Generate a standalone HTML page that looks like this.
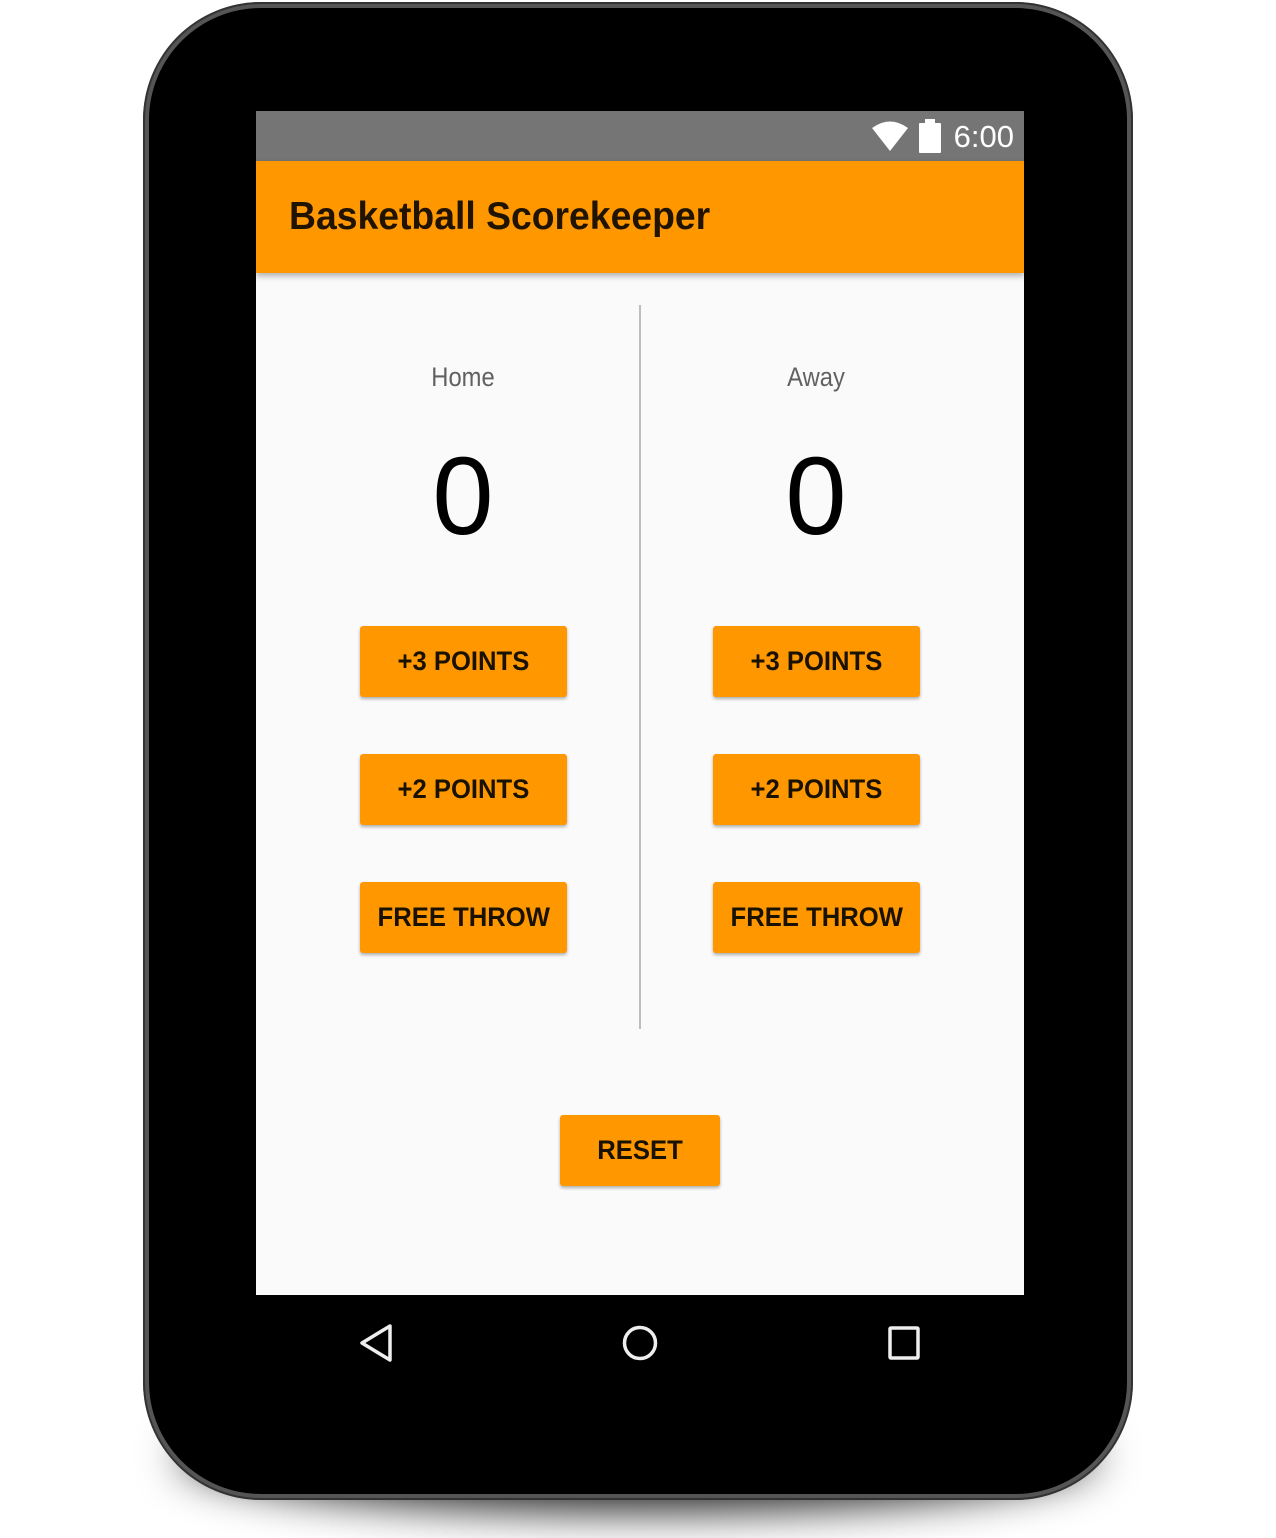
<!DOCTYPE html>
<html><head><meta charset="utf-8"><style>
html,body{margin:0;padding:0;background:#fff;}
body{width:1276px;height:1538px;position:relative;overflow:hidden;font-family:"Liberation Sans",sans-serif;}
.shadow{position:absolute;left:180px;top:1400px;width:916px;height:110px;border-radius:50%;background:rgba(0,0,0,0.9);filter:blur(22px);}
.dev{position:absolute;left:143px;top:2px;width:990px;height:1498px;border-radius:118px;background:#555;box-shadow:inset 0 0 0 2px #333;}
.dev2{position:absolute;left:6px;top:6px;right:6px;bottom:6px;border-radius:112px;background:#000;}
.screen{position:absolute;left:256px;top:111px;width:768px;height:1184px;background:#fafafa;overflow:hidden;}
.status{position:absolute;left:0;top:0;width:768px;height:50px;background:#757575;}
.time{position:absolute;right:10px;top:8px;color:#fff;font-size:31px;}
.bar{position:absolute;left:0;top:50px;width:768px;height:112px;background:#ff9800;box-shadow:0 3px 6px rgba(0,0,0,0.3);}
.title{position:absolute;left:33px;top:34px;font-size:39px;color:#201400;font-weight:bold;transform:scaleX(0.957);transform-origin:left;}
.div{position:absolute;left:383px;top:194px;width:2px;height:724px;background:#bdbdbd;}
.lbl{position:absolute;width:300px;text-align:center;font-size:27px;color:#616161;top:251px;transform:scaleX(0.88);}
.score{position:absolute;width:300px;text-align:center;font-size:110px;color:#000;top:322px;}
.btn{position:absolute;width:207px;height:71px;background:#ff9800;border-radius:3px;box-shadow:0 2px 3px rgba(0,0,0,0.3);text-align:center;line-height:71px;font-size:27px;color:#1a1200;font-weight:bold;}
.btn span{display:inline-block;transform:scaleX(0.95);white-space:nowrap;}
</style></head><body>
<div class="shadow"></div>
<div class="dev"><div class="dev2"></div></div>
<div class="screen">
 <div class="status">
  <svg style="position:absolute;left:614px;top:8px" width="44" height="34" viewBox="0 0 44 34"><path d="M2 9 Q20 -4 38 9 L20 32 Z" fill="#fff"/></svg>
  <div style="position:absolute;left:663px;top:12px;width:22px;height:30px;background:#fff;border-radius:1px"></div>
  <div style="position:absolute;left:669px;top:8px;width:10px;height:5px;background:#fff"></div>
  <div class="time">6:00</div>
 </div>
 <div class="bar"><div class="title">Basketball Scorekeeper</div></div>
 <div class="div"></div>
 <div class="lbl" style="left:57px">Home</div>
 <div class="lbl" style="left:410px">Away</div>
 <div class="score" style="left:57px">0</div>
 <div class="score" style="left:410px">0</div>
 <div class="btn" style="left:104px;top:515px"><span>+3 POINTS</span></div>
 <div class="btn" style="left:104px;top:643px"><span>+2 POINTS</span></div>
 <div class="btn" style="left:104px;top:771px"><span>FREE THROW</span></div>
 <div class="btn" style="left:457px;top:515px"><span>+3 POINTS</span></div>
 <div class="btn" style="left:457px;top:643px"><span>+2 POINTS</span></div>
 <div class="btn" style="left:457px;top:771px"><span>FREE THROW</span></div>
 <div class="btn" style="left:304px;top:1004px;width:160px"><span>RESET</span></div>
</div>
<svg style="position:absolute;left:0;top:0" width="1276" height="1538">
 <path d="M390 1326 L362 1343 L390 1360 Z" fill="none" stroke="#eee" stroke-width="3.5" stroke-linejoin="round"/>
 <circle cx="640" cy="1343" r="15.5" fill="none" stroke="#eee" stroke-width="3.5"/>
 <rect x="890" y="1328" width="28" height="30" rx="1" fill="none" stroke="#eee" stroke-width="3.5"/>
</svg>
</body></html>
